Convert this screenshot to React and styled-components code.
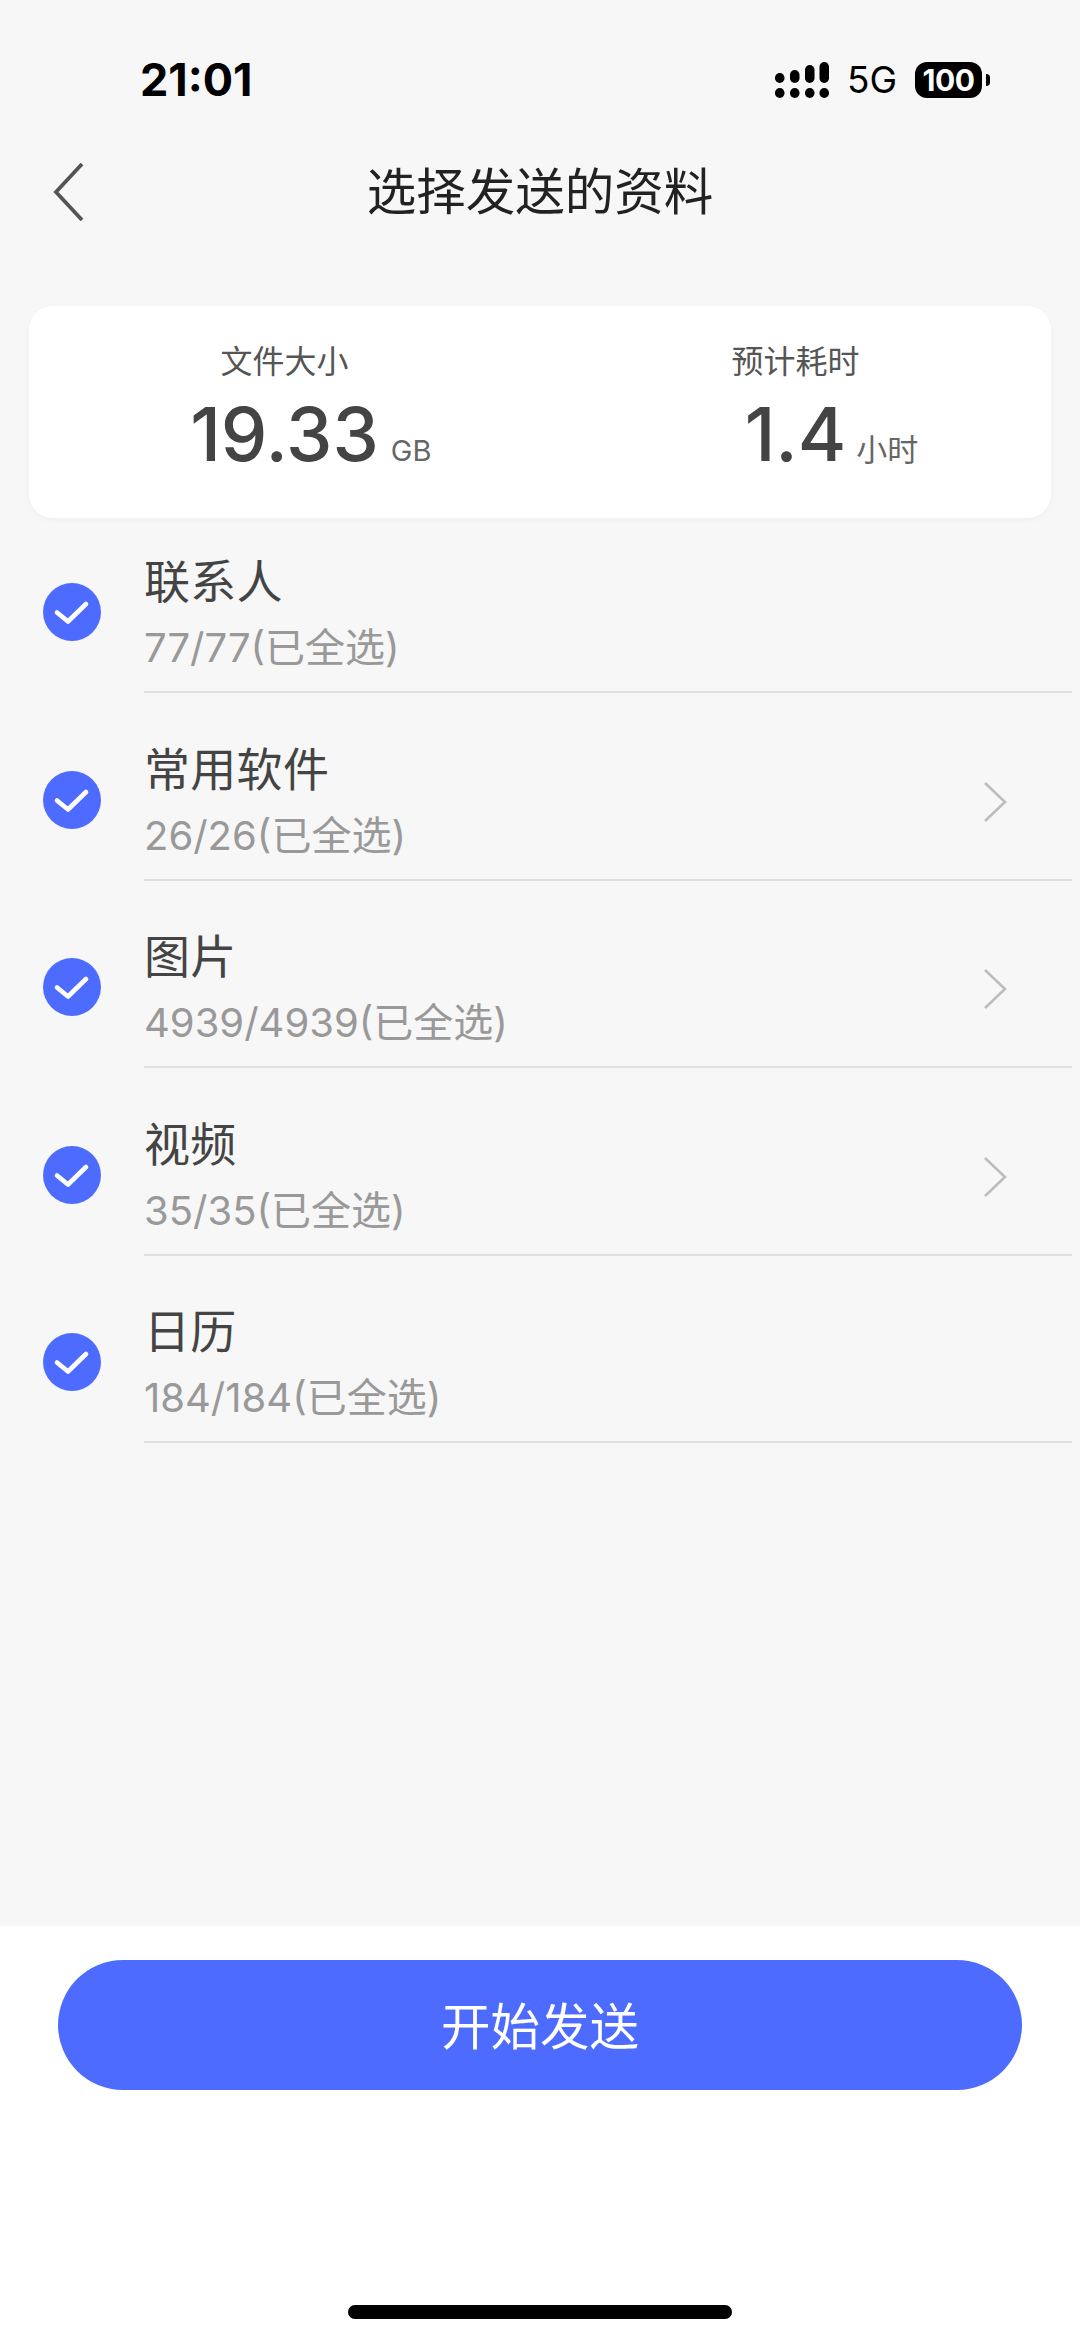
import React from 'react'
import styled, { createGlobalStyle } from 'styled-components'

const items = [
  { name: '联系人', count: '77/77(已全选)' },
  { name: '常用软件', count: '26/26(已全选)', more: true },
  { name: '图片', count: '4939/4939(已全选)', more: true },
  { name: '视频', count: '35/35(已全选)', more: true },
  { name: '日历', count: '184/184(已全选)' },
]

const signal = [
  { x: 0, h: 10 },
  { x: 15, h: 13 },
  { x: 30, h: 18 },
  { x: 44.5, h: 21 },
]

const SignalIcon = () => (
  <svg width="54" height="36" viewBox="0 0 54 36">
    {signal.map(s => (
      <g key={s.x} fill="#000">
        <rect x={s.x} y={21 - s.h} width="9.5" height={s.h} rx="4.7" />
        <rect x={s.x} y="26" width="9.5" height="10" rx="4.7" />
      </g>
    ))}
  </svg>
)

const App = () => {
  return (
    <Page>
      <GlobalStyle />
      <Main>
        <StatusBar>
          <Time>21:01</Time>
          <StatusRight>
            <SignalIcon />
            <Network>5G</Network>
            <Battery>100</Battery>
          </StatusRight>
        </StatusBar>

        <NavBar>
          <svg width="32" height="60" viewBox="0 0 32 60" fill="none">
            <path d="M29 2 3 30l26 28" stroke="#555" strokeWidth="3.8" />
          </svg>
          <Title>选择发送的资料</Title>
        </NavBar>

        <SummaryCard>
          <Stat>
            <StatLabel>文件大小</StatLabel>
            <StatValue>
              <Amount>19.33</Amount>
              <Unit>GB</Unit>
            </StatValue>
          </Stat>
          <Stat>
            <StatLabel>预计耗时</StatLabel>
            <StatValue>
              <Amount>1.4</Amount>
              <Unit $cjk>小时</Unit>
            </StatValue>
          </Stat>
        </SummaryCard>

        <List>
          {items.map(item => (
            <Row key={item.name}>
              <Check>
                <svg width="58" height="58" viewBox="0 0 58 58" fill="none">
                  <circle cx="29" cy="29" r="29" fill="#4d6cff" />
                  <path d="M14 29.5 25 38.5 43 21" stroke="#fff" strokeWidth="4.6" strokeLinecap="round" strokeLinejoin="round" />
                </svg>
              </Check>
              <RowBody>
                <div>
                  <ItemName>{item.name}</ItemName>
                  <ItemCount>{item.count}</ItemCount>
                </div>
                {item.more && (
                  <More>
                    <svg width="24" height="42" viewBox="0 0 24 42" fill="none">
                      <path d="M2 2l20 19L2 40" stroke="#bdbdbd" strokeWidth="2.6" />
                    </svg>
                  </More>
                )}
              </RowBody>
            </Row>
          ))}
        </List>
      </Main>

      <Footer>
        <SendButton>开始发送</SendButton>
        <HomeBar />
      </Footer>
    </Page>
  )
}

export default App

const GlobalStyle = createGlobalStyle`
  * {
    box-sizing: border-box;
  }
  body {
    margin: 0;
    background: #f7f7f7;
    font-family: Inter, "Noto Sans CJK SC", sans-serif;
  }
`

const Page = styled.div`
  width: 1080px;
  height: 2341px;
  display: flex;
  flex-direction: column;
  overflow: hidden;
`

const Main = styled.main`
  flex: 1;
  background: #f7f7f7;
`

const StatusBar = styled.div`
  height: 140px;
  padding: 62px 90px 0 140px;
  display: flex;
  justify-content: space-between;
  align-items: flex-start;
`

const Time = styled.div`
  font-size: 45px;
  line-height: 36px;
  font-weight: 700;
  color: #000;
`

const StatusRight = styled.div`
  display: flex;
  align-items: center;
  height: 36px;
`

const Network = styled.div`
  margin-left: 18px;
  width: 68px;
  font-size: 37px;
  line-height: 36px;
  color: #000;
`

const Battery = styled.div`
  position: relative;
  width: 67px;
  height: 36px;
  margin-right: 8px;
  border-radius: 12px;
  background: #000;
  color: #fff;
  font-size: 30px;
  font-weight: 700;
  line-height: 36px;
  text-align: center;
  letter-spacing: -0.5px;

  &::after {
    content: '';
    position: absolute;
    left: 71px;
    top: 12px;
    width: 4px;
    height: 12px;
    border-radius: 0 6px 6px 0;
    background: #000;
  }
`

const NavBar = styled.div`
  height: 166px;
  padding: 22px 0 0 53px;
  margin-right: 53px;
  display: grid;
  grid-template-columns: 1fr auto 1fr;
  align-items: start;
`

const Title = styled.h1`
  margin: 0;
  grid-column: 2;
  font-size: 49.5px;
  line-height: 60px;
  font-weight: 400;
  color: #222;
`

const SummaryCard = styled.section`
  margin: 0 29px;
  height: 212px;
  padding-top: 34px;
  display: grid;
  grid-template-columns: 1fr 1fr;
  background: #fff;
  border-radius: 24px;
  box-shadow: 0 2px 6px rgba(0, 0, 0, 0.03);
`

const Stat = styled.div`
  display: flex;
  flex-direction: column;
  align-items: stretch;
`

const StatLabel = styled.div`
  font-size: 32px;
  line-height: 44px;
  text-align: center;
  color: #555;
`

const StatValue = styled.div`
  margin-top: 8px;
  display: grid;
  grid-template-columns: 1fr auto 1fr;
  align-items: baseline;
`

const Amount = styled.div`
  grid-column: 2;
  font-size: 74px;
  line-height: 84px;
  font-weight: 500;
  color: #444;
`

const Unit = styled.span`
  margin-left: ${props => (props.$cjk ? '10px' : '12px')};
  font-size: ${props => (props.$cjk ? '31px' : '29px')};
  color: #666;
`

const List = styled.div`
  padding-top: 38px;
  display: flex;
  flex-direction: column;
  gap: 50.5px;
`

const Row = styled.div`
  display: flex;
  padding: 0 8px 0 43px;
`

const Check = styled.div`
  margin-top: 27px;
  width: 58px;
  height: 58px;
`

const RowBody = styled.div`
  flex: 1;
  margin-left: 43px;
  height: 137px;
  padding-right: 65px;
  border-bottom: 2px solid #e0e0e0;
  display: flex;
  justify-content: space-between;
  align-items: flex-start;
`

const ItemName = styled.div`
  margin-top: -3px;
  font-size: 46px;
  line-height: 56px;
  letter-spacing: 0.3px;
  color: #444;
`

const ItemCount = styled.div`
  margin-top: 14px;
  font-size: 40px;
  line-height: 50px;
  color: #999;
`

const More = styled.div`
  margin-top: 37px;
`

const Footer = styled.footer`
  height: 415px;
  padding-top: 34px;
  background: #fff;
  display: flex;
  flex-direction: column;
  align-items: center;
`

const SendButton = styled.button`
  width: 964px;
  height: 130px;
  padding-bottom: 4px;
  border: none;
  border-radius: 65px;
  background: #4d6cff;
  color: #fff;
  font-family: inherit;
  font-size: 49.5px;
`

const HomeBar = styled.div`
  margin-top: 215px;
  width: 384px;
  height: 14px;
  border-radius: 7px;
  background: #000;
`
